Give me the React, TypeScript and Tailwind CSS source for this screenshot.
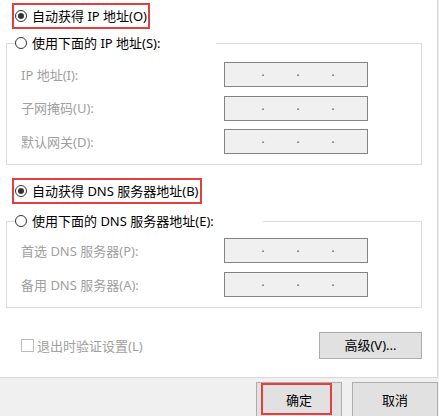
import React from "react";

const font = "font-['Segoe_UI','Noto_Sans','Noto_Sans_CJK_SC',sans-serif]";

function Radio({ checked }: { checked?: boolean }) {
    return (
        <span className="flex h-[12px] w-[12px] shrink-0 items-center justify-center rounded-full border border-[#333333] bg-white">
            {checked && <span className="h-[6px] w-[6px] rounded-full bg-[#333333]" />}
        </span>
    );
}

function IpBox() {
    return (
        <div className="flex h-[25px] w-[144px] items-center border border-[#838383] bg-[#f0f0f0] pl-[36px] gap-[31px]">
            {[0, 1, 2].map((i) => (
                <span key={i} className="w-[4px] -translate-y-[3px] text-center text-[13px] leading-[13px] text-[#6d6d6d]">
                    .
                </span>
            ))}
        </div>
    );
}

function Field({ label }: { label: string }) {
    return (
        <div className="flex items-center">
            <span className="w-[203px] text-[13px] leading-[20px] text-[#a0a0a0]">{label}</span>
            <IpBox />
        </div>
    );
}

export default function App() {
    return (
        <div className={`flex h-[416px] w-[439px] flex-col overflow-hidden bg-[#f0f0f0] text-black ${font}`}>
            {/* Main panel */}
            <div className="flex h-[378px] w-[438px] shrink-0 flex-col border-r border-b border-[#d9d9d9] bg-white pt-[6px] pl-[6px]">
                {/* Auto IP */}
                <div className="ml-[9px] flex h-[20px] items-center">
                    <label className="flex items-center gap-[5px] outline-2 outline-offset-1 outline-[#e53e3e]">
                        <Radio checked />
                        <span className="text-[13px] leading-[20px]">自动获得 IP 地址(O)</span>
                    </label>
                </div>

                {/* Manual IP group */}
                <fieldset className="mt-[7px] w-[416px] border border-[#dcdcdc]">
                    <legend className="ml-[8px] flex h-[20px] w-[201px] items-center gap-[5px]">
                        <Radio />
                        <span className="text-[13px] leading-[20px]">使用下面的 IP 地址(S):</span>
                    </legend>
                    <div className="flex flex-col gap-[8.5px] pt-[9px] pb-[10px] pl-[14px]">
                        <Field label="IP 地址(I):" />
                        <Field label="子网掩码(U):" />
                        <Field label="默认网关(D):" />
                    </div>
                </fieldset>

                {/* Auto DNS */}
                <div className="mt-[16px] ml-[9px] flex h-[20px] items-center">
                    <label className="flex items-center gap-[5px] outline-2 outline-offset-1 outline-[#e53e3e]">
                        <Radio checked />
                        <span className="text-[13px] leading-[20px]">自动获得 DNS 服务器地址(B)</span>
                    </label>
                </div>

                {/* Manual DNS group */}
                <fieldset className="mt-[10px] w-[416px] border border-[#dcdcdc]">
                    <legend className="ml-[8px] flex h-[20px] w-[248px] items-center gap-[5px]">
                        <Radio />
                        <span className="text-[13px] leading-[20px]">使用下面的 DNS 服务器地址(E):</span>
                    </legend>
                    <div className="flex flex-col gap-[9px] pt-[7px] pb-[10px] pl-[14px]">
                        <Field label="首选 DNS 服务器(P):" />
                        <Field label="备用 DNS 服务器(A):" />
                    </div>
                </fieldset>

                {/* Validate + Advanced */}
                <div className="mt-[24px] flex h-[27px] w-[416px] items-center justify-between pl-[15px]">
                    <label className="flex items-center gap-[3px]">
                        <span className="h-[13px] w-[13px] border border-[#bcbcbc] bg-white" />
                        <span className="text-[13px] leading-[20px] text-[#a0a0a0]">退出时验证设置(L)</span>
                    </label>
                    <button className="h-[27px] w-[103px] border border-[#adadad] bg-[#e1e1e1] text-[13px]">
                        高级(V)...
                    </button>
                </div>
            </div>

            {/* Footer buttons */}
            <div className="flex flex-1 justify-end gap-[10px] pt-[4px] pr-[1px]">
                <button className="relative h-[38px] w-[86px] shrink-0 border border-[#adadad] bg-[#e1e1e1] text-[13px]">
                    确定
                    <span className="absolute top-[0px] left-[4px] h-[32px] w-[71px] border-2 border-[#e53e3e]" />
                </button>
                <button className="h-[38px] w-[86px] shrink-0 border border-[#adadad] bg-[#e1e1e1] text-[13px]">
                    取消
                </button>
            </div>
        </div>
    );
}
